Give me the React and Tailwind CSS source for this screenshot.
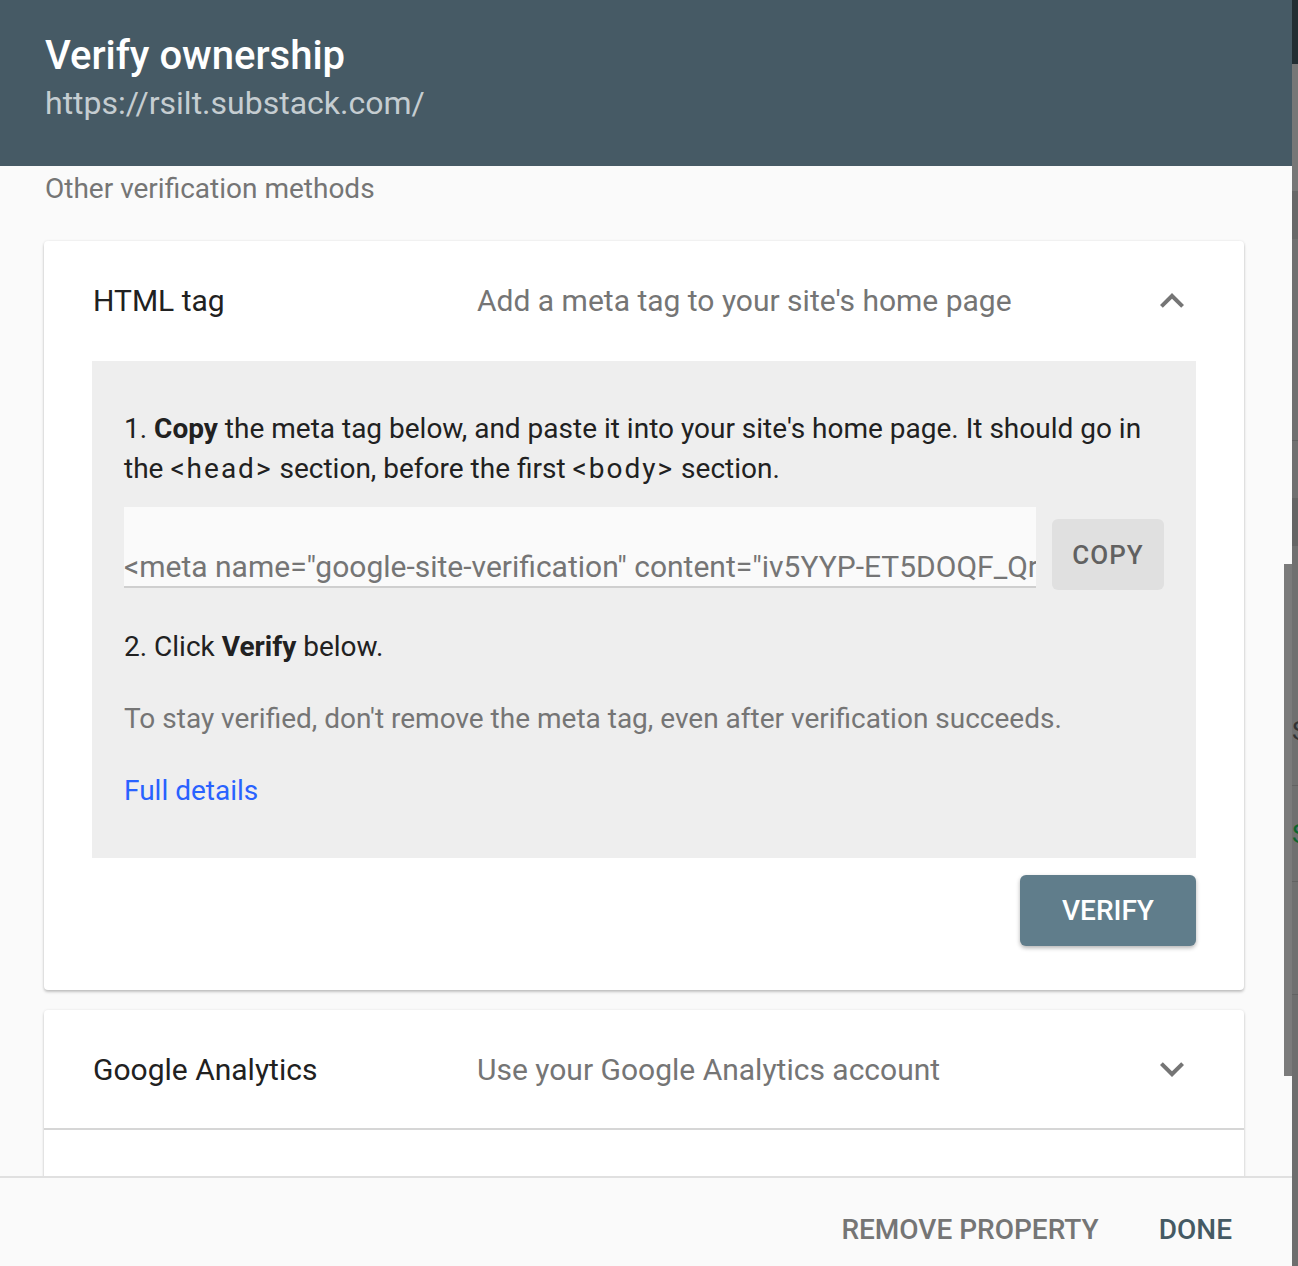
const font = { fontFamily: 'Roboto, "Noto Sans", Arial, sans-serif' }

function ChevronUp() {
  return (
    <svg width="48" height="48" viewBox="0 0 24 24" className="fill-[#757575]">
      <path d="M12 8l-6 6 1.41 1.41L12 10.83l4.59 4.58L18 14z" />
    </svg>
  )
}

function ChevronDown() {
  return (
    <svg width="48" height="48" viewBox="0 0 24 24" className="fill-[#757575]">
      <path d="M16.59 8.59L12 13.17 7.41 8.59 6 10l6 6 6-6z" />
    </svg>
  )
}

function PanelHeader({ title, desc, open }) {
  return (
    <div className={`flex items-center pl-[49px] pr-[48px] ${open ? 'h-[120px] pb-[1px]' : 'h-[118px]'}`}>
      <div className="w-[384px] text-[30px] text-[#212121]">{title}</div>
      <div className="flex-1 text-[30px] text-[#757575]">{desc}</div>
      {open ? <ChevronUp /> : <ChevronDown />}
    </div>
  )
}

export default function App() {
  return (
    <div className="flex w-[1298px] h-[1266px] overflow-hidden font-['Roboto',sans-serif]" style={font}>
      <div className="relative flex flex-col w-[1292px] h-full bg-[#fafafa]">
        {/* header */}
        <div className="h-[166px] shrink-0 bg-[#465a65] pl-[45px] pt-[32px]">
          <div className="text-[40px] leading-[48px] font-medium text-white">Verify ownership</div>
          <div className="mt-[3px] text-[32px] leading-[40px] text-[#c5cdd1]">https://rsilt.substack.com/</div>
        </div>

        {/* scrolling content */}
        <div className="relative flex-1 overflow-hidden px-[44px] pr-[48px]">
          <div className="pt-[7px] pl-[1px] text-[28px] leading-[32px] text-[#757575]">Other verification methods</div>

          <div className="mt-[36px] bg-white rounded-[4px] shadow-[0_2px_3px_rgba(0,0,0,0.22),0_0_3px_rgba(0,0,0,0.08)]">
            <PanelHeader title="HTML tag" desc="Add a meta tag to your site's home page" open />

            <div className="mx-[48px] bg-[#eeeeee] pt-[48px] pb-[47px] px-[32px] text-[28px] leading-[40px] text-[#212121]">
              <p>
                1. <b className="font-bold">Copy</b> the meta tag below, and paste it into your site's home page. It should go in the <span className="tracking-[2px]">&lt;head&gt;</span> section, before the first <span className="tracking-[2px]">&lt;body&gt;</span> section.
              </p>

              <div className="flex items-end gap-[16px] mt-[18px]">
                <div className="w-[912px] h-[81px] bg-[#fafafa] border-b-[2px] border-[#cfcfcf] flex items-end overflow-hidden">
                  <div className="whitespace-nowrap text-[30px] leading-[36px] pb-[1px] text-[#757575]">
                    &lt;meta name="google-site-verification" content="iv5YYP-ET5DOQF_QrXh3k1Zp8mL0vT9sWbNc2R4yEgA" /&gt;
                  </div>
                </div>
                <button className="w-[112px] h-[71px] mb-[-2px] rounded-[6px] bg-[#e0e0e0] text-[26px] font-medium tracking-[0.04em] text-[#616161]">
                  COPY
                </button>
              </div>

              <p className="mt-[39px]">
                2. Click <b className="font-bold">Verify</b> below.
              </p>
              <p className="mt-[32px] text-[#757575]">
                To stay verified, don't remove the meta tag, even after verification succeeds.
              </p>
              <p className="mt-[32px] text-[#2962ff]">Full details</p>
            </div>

            <div className="flex justify-end px-[48px] pt-[17px] pb-[44px]">
              <button className="w-[176px] h-[71px] rounded-[6px] bg-[#607d8b] text-white text-[28px] font-medium shadow-[0_2px_4px_rgba(0,0,0,0.3)]">
                VERIFY
              </button>
            </div>
          </div>

          <div className="mt-[20px] bg-white rounded-t-[4px] shadow-[0_2px_3px_rgba(0,0,0,0.18),0_0_3px_rgba(0,0,0,0.08)]">
            <PanelHeader title="Google Analytics" desc="Use your Google Analytics account" />
            <div className="h-[120px] border-t-[2px] border-[#d6d6d6]" />
          </div>

          {/* scrollbar thumb */}
          <div className="absolute right-0 top-[398px] w-[8px] h-[512px] bg-[#7b7b7b]" />
        </div>

        {/* footer */}
        <div className="h-[90px] shrink-0 border-t-[2px] border-[#e0e0e0] bg-[#fafafa] flex justify-end items-start pt-[34px] pr-[30px] text-[28px] leading-[36px] font-medium">
          <button className="px-[30px] text-[#757575]">REMOVE PROPERTY</button>
          <button className="px-[30px] text-[#455a64]">DONE</button>
        </div>
      </div>

      {/* page behind the dialog, under the overlay */}
      <div className="flex flex-col w-[6px] h-full overflow-hidden">
        <div className="h-[64px] bg-[#232e33]" />
        <div className="h-[127px] bg-[#777777]" />
        <div className="h-[48px] bg-[#686868]" />
        <div className="h-[202px] bg-[#707070] border-b border-[#626262]" />
        <div className="h-[57px] bg-[#707070]" />
        <div className="h-[48px] bg-[#656565]" />
        <div className="h-[240px] bg-[#707070] border-b border-[#626262] flex items-end overflow-hidden">
          <span className="text-[26px] leading-[108px] text-[#333333] whitespace-nowrap">S</span>
        </div>
        <div className="h-[96px] bg-[#707070] border-b border-[#626262] flex items-center overflow-hidden">
          <span className="text-[26px] leading-[30px] text-[#0d652d] whitespace-nowrap">S</span>
        </div>
        <div className="h-[113px] bg-[#707070] border-b border-[#626262]" />
        <div className="flex-1 bg-[#6e6e6e]" />
      </div>
    </div>
  )
}
